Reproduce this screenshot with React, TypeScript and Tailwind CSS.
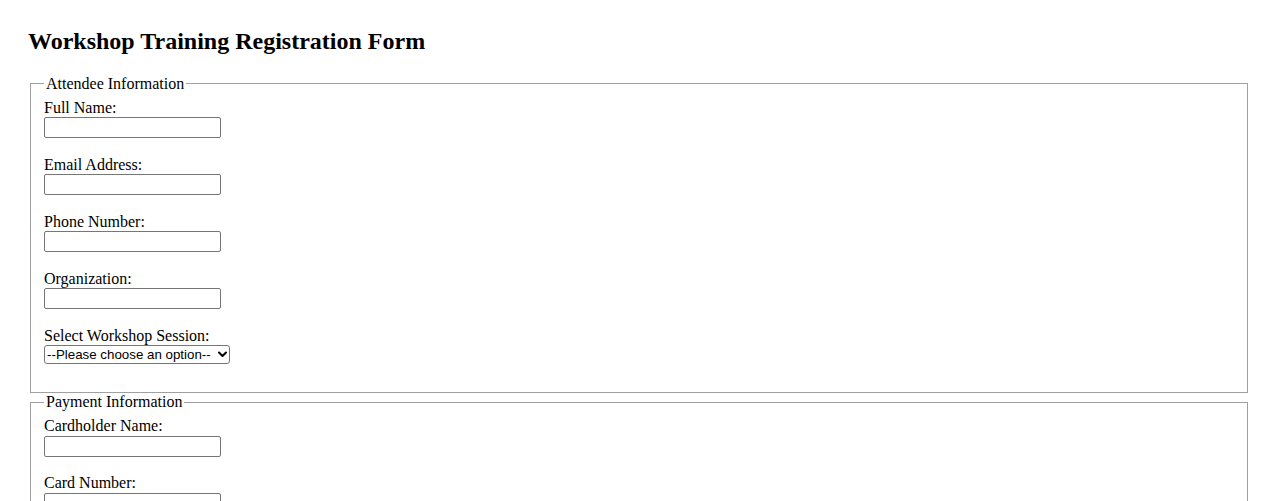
import React from "react";

const serif = "font-['Liberation_Serif','Times_New_Roman',serif]";
const control =
  "block w-[177px] h-[21px] border border-[#767676] rounded-[2px] px-[2px] bg-white text-black text-[13.33px] font-['Liberation_Sans',Arial,sans-serif]";

function Field({ label, type = "text" }: { label: string; type?: string }) {
  return (
    <div className="mb-[17.6px]">
      <label className="block leading-[18.4px]">{label}</label>
      <input type={type} className={control} />
    </div>
  );
}

function Section({ title, children }: { title: string; children: React.ReactNode }) {
  return (
    <fieldset className="mx-[2px] border border-[#a0a0a0] px-[13px] pt-[5.6px] pb-[11px] min-w-0">
      <legend className="px-[2px] leading-[18.4px]">{title}</legend>
      {children}
    </fieldset>
  );
}

export default function App() {
  return (
    <div className={`${serif} bg-white text-black text-[16px] min-h-screen px-[28px] pt-[28px] pb-[28px]`}>
      <h2 className="text-[24px] font-bold leading-[27.6px] mb-[19px]">
        Workshop Training Registration Form
      </h2>
      <form onSubmit={(e) => e.preventDefault()}>
        <Section title="Attendee Information">
          <Field label="Full Name:" />
          <Field label="Email Address:" type="email" />
          <Field label="Phone Number:" type="tel" />
          <Field label="Organization:" />
          <div className="mb-[17.4px]">
            <label className="block leading-[18.4px]">Select Workshop Session:</label>
            <div className="relative w-[186px]">
              <select className="block w-[186px] h-[19px] appearance-none border border-[#767676] rounded-[3px] pl-[2px] pr-[16px] bg-white text-black text-[13.33px] leading-[16px] font-['Liberation_Sans',Arial,sans-serif]">
                <option>--Please choose an option--</option>
                <option>Morning Session</option>
                <option>Afternoon Session</option>
                <option>Evening Session</option>
              </select>
              <svg
                className="pointer-events-none absolute right-[3px] top-[6px]"
                width="9"
                height="7"
                viewBox="0 0 9 7"
                fill="none"
              >
                <path d="M1 1.5L4.5 5L8 1.5" stroke="#000" strokeWidth="2" strokeLinecap="round" strokeLinejoin="round" />
              </svg>
            </div>
          </div>
        </Section>
        <Section title="Payment Information">
          <Field label="Cardholder Name:" />
          <Field label="Card Number:" />
          <Field label="Expiration Date:" />
          <Field label="CVV:" />
        </Section>
        <div className="mt-[16px] ml-[2px]">
          <button
            type="submit"
            className="border border-[#767676] rounded-[2px] bg-[#efefef] px-[6px] py-[1px] text-[13.33px] font-['Liberation_Sans',Arial,sans-serif]"
          >
            Register
          </button>
        </div>
      </form>
    </div>
  );
}
